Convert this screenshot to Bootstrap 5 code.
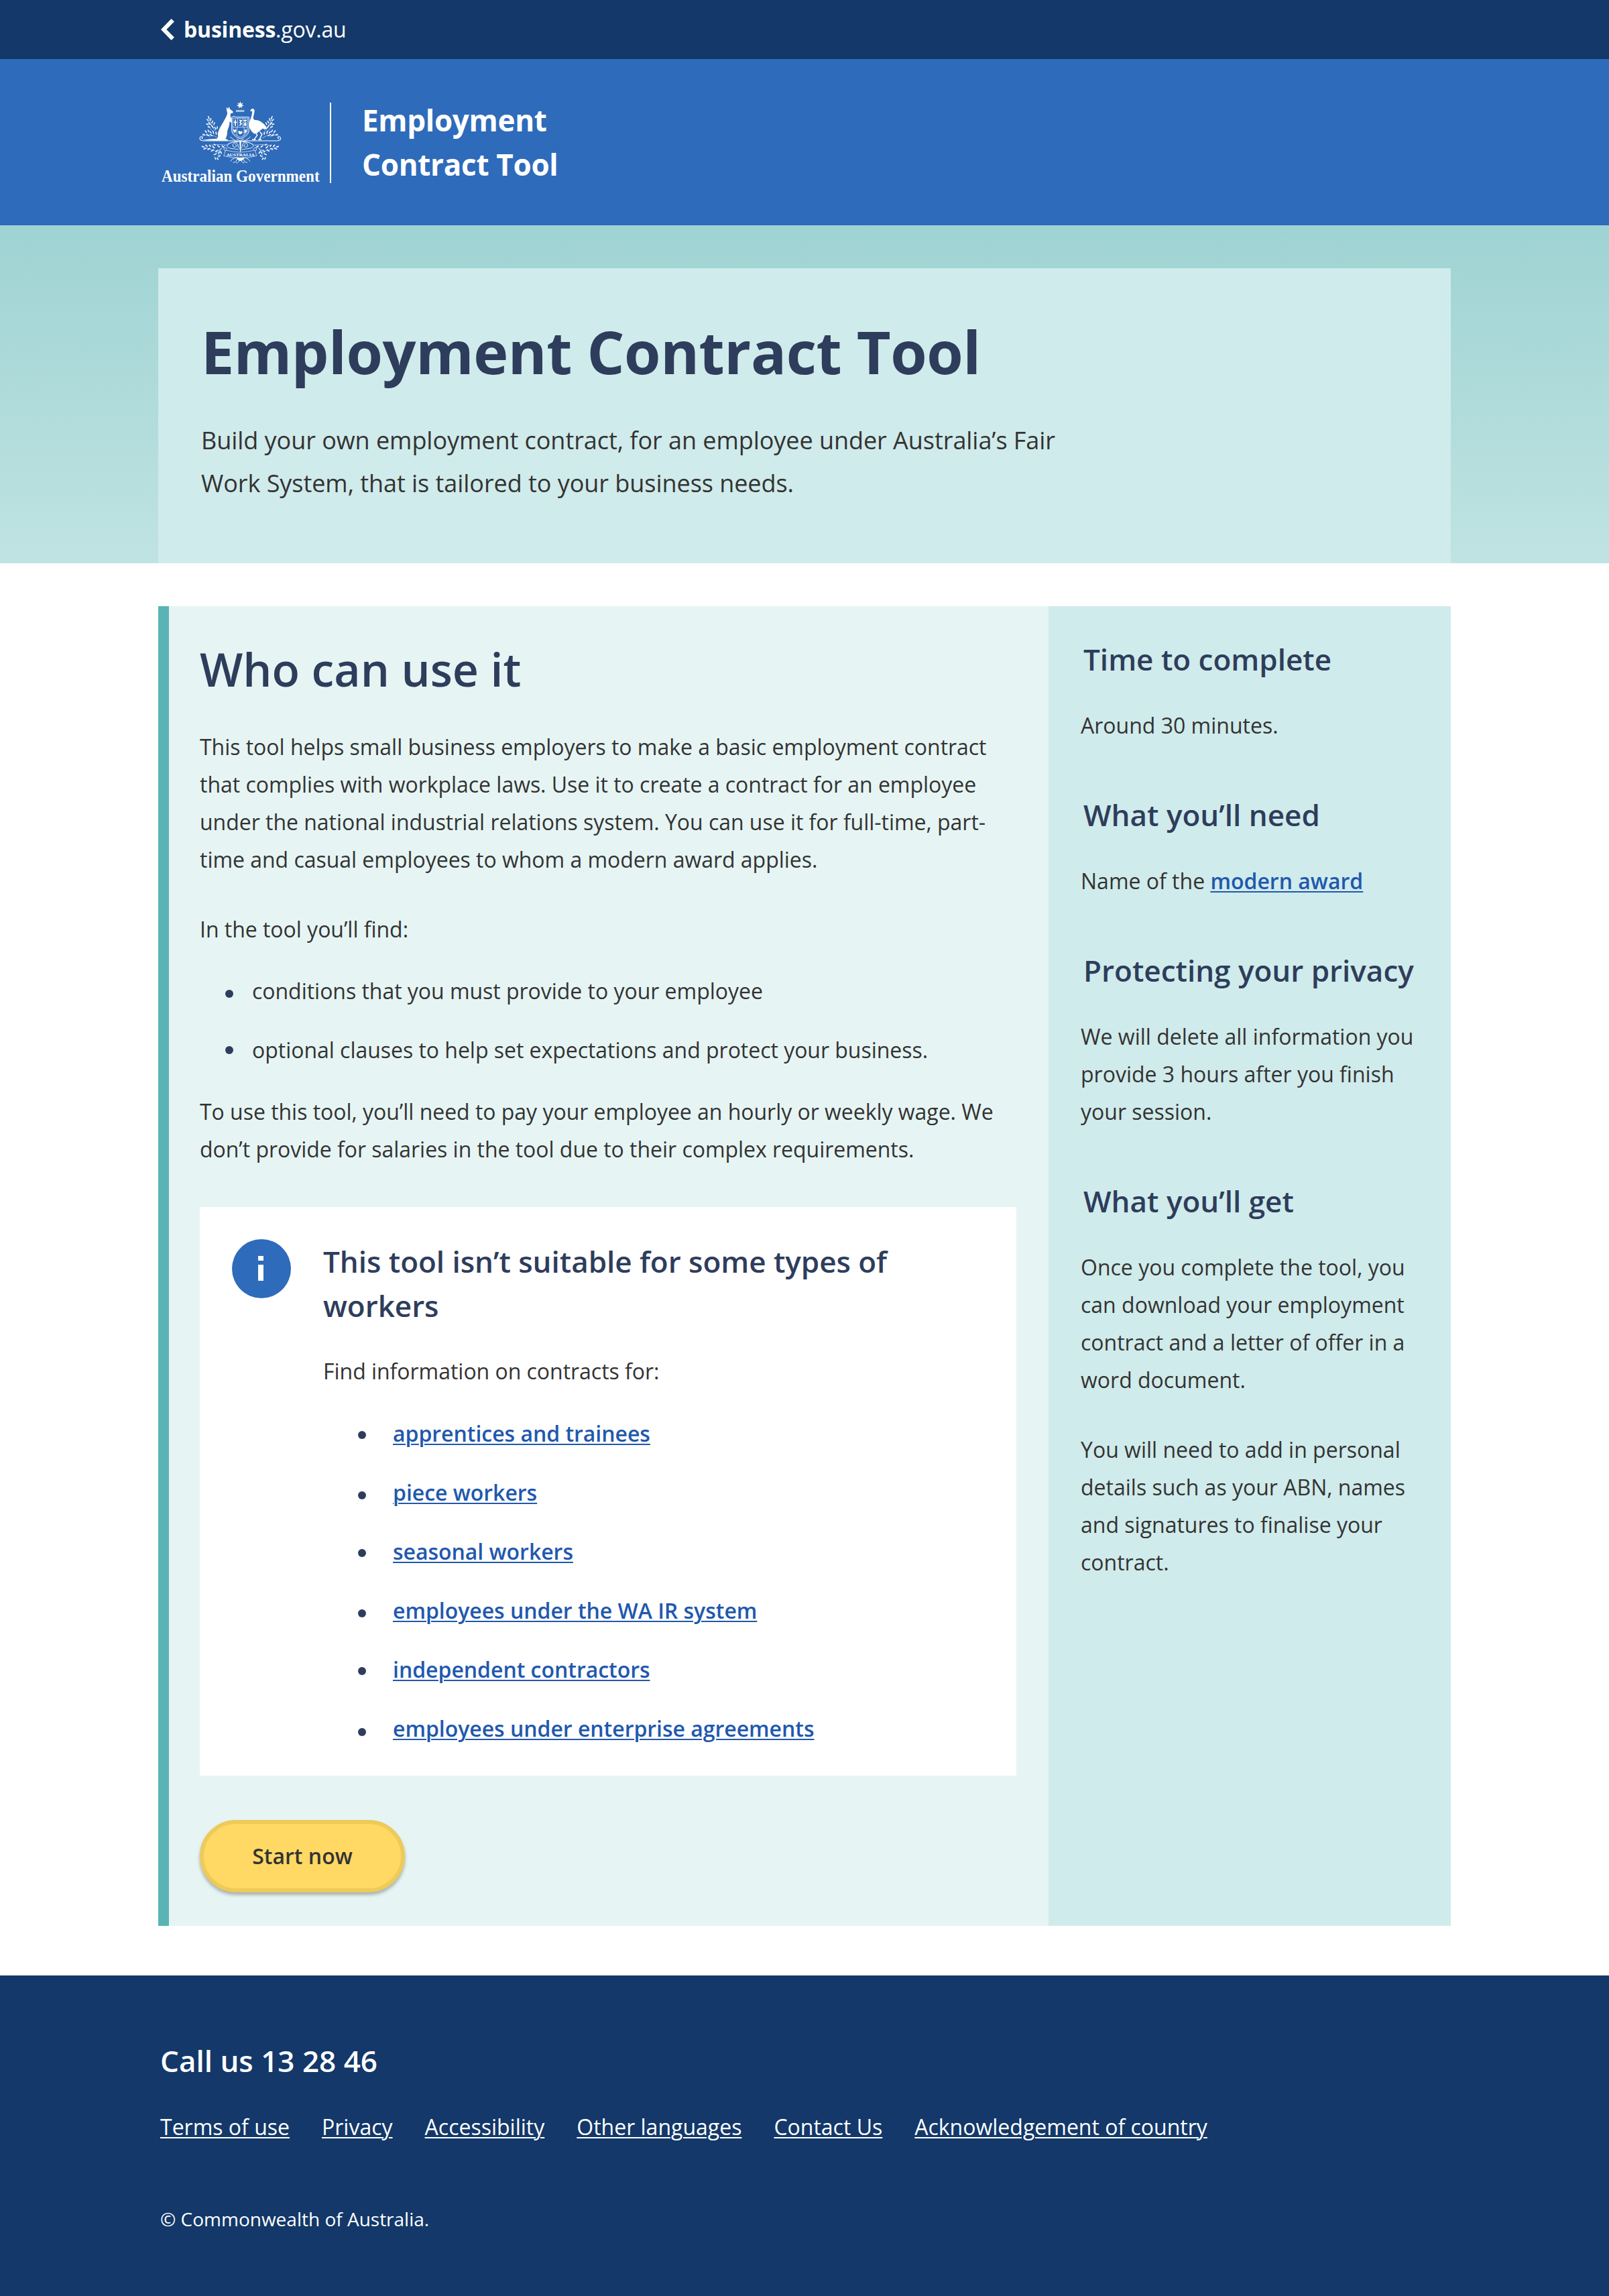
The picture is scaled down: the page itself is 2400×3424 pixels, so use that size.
<!DOCTYPE html>
<html lang="en">
<head>
<meta charset="utf-8">
<meta name="viewport" content="width=device-width, initial-scale=1">
<title>Employment Contract Tool</title>
<link href="https://cdn.jsdelivr.net/npm/bootstrap@5.3.0/dist/css/bootstrap.min.css" rel="stylesheet">
<style>
  body { font-family: "Open Sans", "Noto Sans", sans-serif; font-size: 32px; line-height: 56px; color: #333; background: #fff; }
  h1, h2, h3, p, ul { margin: 0; }
  .wrap-site { width: 1920px; margin: 0 auto; }
  .wrap-panel { width: 1928px; margin: 0 auto; }
  .topbar { height: 88px; background: #133869; color: #fff; }
  .topbar a { gap: 14px; line-height: 48px; letter-spacing: -.2px; }
  .masthead { height: 248px; background: #2e6bba; color: #fff; }
  .masthead svg { overflow: visible; }
  .masthead-rule { width: 2px; height: 120px; margin: 2px 46px 0 14px; background: #fff; }
  .masthead-name { font-size: 44px; line-height: 66px; letter-spacing: -.3px; }
  .hero-band { height: 504px; padding-top: 64px; background: linear-gradient(#9fd3d3, #bfe3e2); }
  .hero-panel { height: 440px; padding: 64px; background: #d0ebeb; }
  .hero-panel h1 { font-size: 88px; line-height: 120px; font-weight: 700; color: #2e3d5c; margin-bottom: 41px; letter-spacing: -.42px; }
  .hero-panel p { font-size: 36px; line-height: 64px; max-width: 1300px; letter-spacing: -.05px; }
  .content-panel { margin-top: 64px; margin-bottom: 74px; height: 1968px; }
  .main-col { width: 1328px; border-left: 16px solid #5ab4b4; background: #e6f5f4; padding: 46px 48px 48px 46px; letter-spacing: -.03px; }
  .main-col h2 { font-size: 68px; line-height: 96px; font-weight: 600; color: #2e3d5c; margin-bottom: 40px; }
  .bullets { list-style: none; padding: 0; display: flex; flex-direction: column; gap: 32px; }
  .bullets li { display: flex; align-items: center; }
  .bullets li::before { content: ""; width: 12px; height: 12px; border-radius: 50%; background: #2e3d5c; flex: none; }
  .bullets-plain { margin: 36px 0; padding-left: 38px; }
  .bullets-plain li { gap: 28px; }
  .bullets-plain li::before { margin-top: 8px; }
  .bullets-plain li:last-child::before { margin-top: 0; }
  .bullets-links { margin-top: 37px; padding-left: 52px; }
  .bullets-links li { gap: 40px; }
  .bullets-links li::before { margin-top: 4px; }
  .bullets-links li:nth-child(even)::before { margin-top: 8px; }
  .bullets-links li:last-child::before { margin-top: 10px; }
  .text-link { color: #2158ad; font-weight: 600; text-decoration: underline; text-decoration-thickness: 2px; text-underline-offset: 3px; }
  .notice { background: #fff; margin: 58px 0 66px; height: 848px; padding: 48px; gap: 48px; }
  .sub-title { font-size: 44px; line-height: 66px; font-weight: 600; color: #2e3d5c; margin-bottom: 37px; }
  .btn-start { --bs-btn-bg: #ffd964; --bs-btn-border-color: #eeca5a; --bs-btn-color: #333; --bs-btn-hover-bg: #ffd964; --bs-btn-hover-border-color: #eeca5a;
    width: 306px; height: 108px; border-width: 6px; font-size: 32px; line-height: 56px; font-weight: 600; box-shadow: 0 4px 5px rgba(0,0,0,.28); }
  .side-col { width: 600px; background: #d0ebeb; padding: 46px 48px; }
  .side-col .sub-title { padding-left: 4px; margin-bottom: 37.5px; }
  .side-col section { margin-bottom: 72.5px; }
  .side-col p + p { margin-top: 48px; }
  .site-foot { height: 478px; background: #133869; color: #fff; padding-top: 94px; }
  .site-foot .wrap-site { width: 1922px; }
  .site-foot .call-line { font-size: 44px; line-height: 66px; font-weight: 600; margin-bottom: 38px; }
  .site-foot nav { gap: 48px; margin-bottom: 85px; }
  .site-foot a { color: #fff; text-decoration-thickness: 2px; text-underline-offset: 3px; }
  .copy-line { font-size: 28px; line-height: 48px; }
</style>
</head>
<body>

<div class="topbar">
  <div class="wrap-site h-100 d-flex align-items-center">
    <a href="#" class="d-flex align-items-center text-white text-decoration-none h-100">
      <svg width="20" height="32" viewBox="0 0 20 32"><path d="M15.5 0 20 4.2 8.4 16 20 27.8 15.5 32 0 16Z" fill="#fff"/></svg>
      <span><b>business</b>.gov.au</span>
    </a>
  </div>
</div>

<header class="masthead">
  <div class="wrap-site h-100 d-flex align-items-center">
    <svg width="238" height="122" viewBox="30 36 714 366" fill="#fff" role="img" aria-label="Australian Government">
      <!-- star and wreath -->
      <path d="M385 36l3.3 10.2 10-3.8-6 8.9 9.3 5.5-10.7.9 1.5 10.6-7.4-7.8-7.4 7.8 1.5-10.6-10.7-.9 9.3-5.5-6-8.9 10 3.8z"/>
      <path d="M366 77h38M366 82h38" stroke="#fff" stroke-width="2"/>
      <path d="M368 79.500h34" stroke="#fff" stroke-width="4" stroke-dasharray="4 5"/>
      <!-- kangaroo -->
      <path d="M323 62l8 8 4-10 4 11 13 10 1 7-11 3q-2 7 0 14l5 18-2 9-7-6q-1 16-5 26l-5 14-2 20q-2 10-7 18l10 4 1 4h-60q-30 0-55-3 35-4 67-6 6-7 3-17 1-20 15-41 12-20 22-40 6-10 5-17-3-9-4-26z"/>
      <!-- shield -->
      <path d="M347 107q10-6 20 0h57v60q0 22-38 37-39-15-39-37z" fill="none" stroke="#fff" stroke-width="3"/>
      <path d="M352 112h66v54q0 18-32 31-34-13-34-31zM352 152h66M374 112v40M397 112v40M370 152v38M402 152v38" fill="none" stroke="#fff" stroke-width="2"/>
      <path d="M356 130h14M363 118v28M381 120l9 3-6 8 6 6-8 7M400 122h14M407 118v10M400 142h14M407 134v12M401 134h12" fill="none" stroke="#fff" stroke-width="5"/>
      <path d="M356 160q4 8 9 0l3 8-7 10-7-10zM376 172q4-8 9 0 7-5 11 2-5 12-14 9-5-1-6-11zM405 160l4 6 5-7v12q-4 8-10 9z"/>
      <!-- emu -->
      <path d="M430 80q2-10 11-11 9 2 8 13-3 13-5 24-3 12 8 14 18 0 33 13 17 14 20 27l-20-2q-10 8-20 17-13 10-19 5-16-12-20-30-2-22 6-37 6-15 7-31z"/>
      <path d="M455 176l6 12-13 18m25-34l9 13-10 20M438 208h16m12 0h14" fill="none" stroke="#fff" stroke-width="4.5"/>
      <!-- compartment and mirrored foliage -->
      <g id="foliage" fill="none" stroke="#fff" stroke-linecap="round">
        <path stroke-width="3.4" d="M385 213H222q-16 0-18-10 1-11 10-8 6 6-1 8"/>
        <path stroke-width="1.6" d="M285 180Q258 160 244 112M285 200Q256 178 214 190M262 170Q246 154 238 140M252 196Q240 188 230 174M370 216Q325 222 302 246T246 248L216 240M302 246Q288 262 272 274M318 232Q280 226 248 234M300 250Q284 270 284 288"/>
        <path stroke-width="4.6" d="M236 117l6 6M242 104l4 10M254 113l-2 9M262 125l-4 8M270 132l-3 8M234 138l8 1M244 131l7 9M241 150l8 2M257 144l7 10M271 152l4 9M283 150l-2 8M228 168l6 6M241 165l4 8M218 184l8 3M251 172l4 6M263 170l3 10M235 186l9 4M251 185l8 5M276 176l2 8M214 238l8 2M222 250l9-3M231 232l6 6M240 252l9-5M247 232l4 6M256 259l9-6M262 238l7 7M276 262l8-7M268 275l9-4M288 268l6-6M290 284l5-7M304 236l7 5M284 234l8 7M272 288l3 7M281 291l5 5M268 228l5 4M298 262l3 7"/>
        <path stroke-width="2.6" d="M385 250Q372 240 374 228 368 218 357 223 348 230 353 239 362 246 369 237 370 230 363 230M385 216Q372 222 340 196M385 232Q390 210 370 204M374 218Q344 216 330 230 320 238 338 246L378 252M316 258Q306 244 318 244 330 246 323 254M376 288Q360 286 348 296L342 304M380 292Q366 294 368 304 362 310 354 310M383 300Q372 316 368 312"/>
        <path stroke-width="2" d="M385 264Q352 263 320 255L311 280Q346 290 385 290"/>
      </g>
      <use href="#foliage" transform="translate(770) scale(-1 1)"/>
      <path d="M382 216h7l-1 46h-4zM370 288h32v6l-10 8h-12l-10-8z"/>
      <text x="386" y="283" text-anchor="middle" textLength="126" lengthAdjust="spacingAndGlyphs" font-family="Liberation Serif, serif" font-weight="700" font-size="21">AUSTRALIA</text>
      <text x="33" y="395" textLength="707" lengthAdjust="spacingAndGlyphs" font-family="Liberation Serif, serif" font-weight="700" font-size="77">Australian Government</text>
    </svg>
    <div class="masthead-rule"></div>
    <div class="masthead-name fw-bold">Employment<br>Contract Tool</div>
  </div>
</header>

<div class="hero-band">
  <div class="wrap-panel hero-panel">
    <h1>Employment Contract Tool</h1>
    <p>Build your own employment contract, for an employee under Australia’s Fair Work System, that is tailored to your business needs.</p>
  </div>
</div>

<div class="wrap-panel content-panel d-flex">
  <main class="main-col flex-shrink-0">
    <h2>Who can use it</h2>
    <p class="mb-5">This tool helps small business employers to make a basic employment contract that complies with workplace laws. Use it to create a contract for an employee under the national industrial relations system. You can use it for full-time, part-time and casual employees to whom a modern award applies.</p>
    <p>In the tool you’ll find:</p>
    <ul class="bullets bullets-plain">
      <li>conditions that you must provide to your employee</li>
      <li>optional clauses to help set expectations and protect your business.</li>
    </ul>
    <p>To use this tool, you’ll need to pay your employee an hourly or weekly wage. We don’t provide for salaries in the tool due to their complex requirements.</p>

    <div class="notice d-flex align-items-start">
      <svg class="flex-shrink-0" width="88" height="88" viewBox="0 0 88 88"><circle cx="44" cy="44" r="44" fill="#2e6bba"/><path d="M39 25h8v7h-8zM39 38h8v24h-8z" fill="#fff"/></svg>
      <div class="flex-grow-1">
        <h3 class="sub-title">This tool isn’t suitable for some types of workers</h3>
        <p>Find information on contracts for:</p>
        <ul class="bullets bullets-links">
          <li><a class="text-link" href="#">apprentices and trainees</a></li>
          <li><a class="text-link" href="#">piece workers</a></li>
          <li><a class="text-link" href="#">seasonal workers</a></li>
          <li><a class="text-link" href="#">employees under the WA IR system</a></li>
          <li><a class="text-link" href="#">independent contractors</a></li>
          <li><a class="text-link" href="#">employees under enterprise agreements</a></li>
        </ul>
      </div>
    </div>

    <button type="button" class="btn btn-start rounded-pill d-flex align-items-center justify-content-center">Start now</button>
  </main>

  <aside class="side-col flex-shrink-0">
    <section>
      <h3 class="sub-title">Time to complete</h3>
      <p>Around 30 minutes.</p>
    </section>
    <section>
      <h3 class="sub-title">What you’ll need</h3>
      <p>Name of the <a class="text-link" href="#">modern award</a></p>
    </section>
    <section>
      <h3 class="sub-title">Protecting your privacy</h3>
      <p>We will delete all information you provide 3 hours after you finish your session.</p>
    </section>
    <section>
      <h3 class="sub-title">What you’ll get</h3>
      <p>Once you complete the tool, you can download your employment contract and a letter of offer in a word document.</p>
      <p>You will need to add in personal details such as your ABN, names and signatures to finalise your contract.</p>
    </section>
  </aside>
</div>

<footer class="site-foot">
  <div class="wrap-site">
    <div class="call-line">Call us 13 28 46</div>
    <nav class="d-flex">
      <a href="#">Terms of use</a>
      <a href="#">Privacy</a>
      <a href="#">Accessibility</a>
      <a href="#">Other languages</a>
      <a href="#">Contact Us</a>
      <a href="#">Acknowledgement of country</a>
    </nav>
    <div class="copy-line">© Commonwealth of Australia.</div>
  </div>
</footer>

<script src="https://cdn.jsdelivr.net/npm/bootstrap@5.3.0/dist/js/bootstrap.bundle.min.js"></script>
</body>
</html>
